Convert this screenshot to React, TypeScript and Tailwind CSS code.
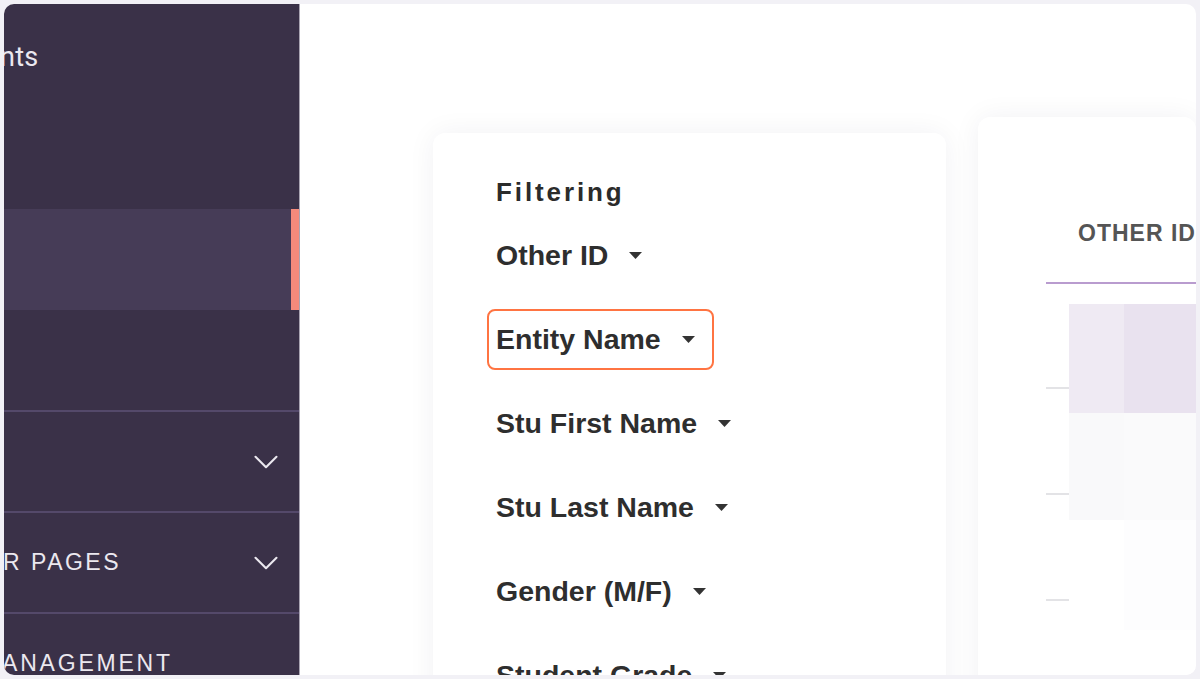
import { ChevronDown } from "lucide-react"

const filters = ["Other ID", "Entity Name", "Stu First Name", "Stu Last Name", "Gender (M/F)", "Student Grade"]

function Caret() {
  return (
    <svg width="13" height="7" viewBox="0 0 13 7" className="ml-[21px] shrink-0">
      <polygon points="0,0 13,0 6.5,7" fill="#333" />
    </svg>
  )
}

function SideRow({ children, divider = false, active = false, h = "h-[101px]" }: { children?: React.ReactNode; divider?: boolean; active?: boolean; h?: string }) {
  return (
    <div className={`relative flex items-center ${h} ${divider ? "border-t-2 border-[#54496a]" : ""} ${active ? "bg-[#463c57]" : ""}`}>
      {children}
      {active && <span className="absolute right-0 top-0 h-full w-[8px] bg-[#f48a7b]" />}
    </div>
  )
}

export default function App() {
  return (
    <div className="h-[679px] w-[1200px] bg-[#f2f1f6] p-[4px]" style={{ fontFamily: '"Liberation Sans", Arial, sans-serif' }}>
      <div className="flex h-[671px] overflow-hidden rounded-[10px] bg-white">
        <aside className="w-[296px] shrink-0 overflow-hidden border-r border-[#aaa5b3] bg-[#3a3148] pt-[3px] text-[#ebe8ef]">
          <SideRow>
            <span className="-ml-[4px] text-[27px] tracking-[0.3px]" style={{ fontFamily: "Roboto, sans-serif" }}>nts</span>
          </SideRow>
          <SideRow />
          <SideRow active />
          <SideRow h="h-[100px]" />
          <SideRow divider>
            <ChevronDown size={42} strokeWidth={1.2} className="absolute right-[12px]" />
          </SideRow>
          <SideRow divider>
            <span className="-ml-[1px] text-[23px] tracking-[2.5px]">R PAGES</span>
            <ChevronDown size={42} strokeWidth={1.2} className="absolute right-[12px]" />
          </SideRow>
          <SideRow divider>
            <span className="-ml-[2px] text-[23px] tracking-[2.8px]">ANAGEMENT</span>
          </SideRow>
        </aside>

        <main className="flex flex-1 items-start gap-[32px] overflow-hidden pl-[133px] pt-[113px]">
          <section className="mt-[16px] h-[640px] w-[513px] shrink-0 rounded-xl bg-white pl-[54px] pt-[43px] shadow-[0_0_28px_rgba(40,30,60,0.06)]">
            <h2 className="ml-[9px] text-[26px] font-bold leading-[32px] tracking-[2.9px] text-[#2b2b2b]">Filtering</h2>
            <div className="mt-[17px] flex flex-col items-start gap-[23px]">
              {filters.map((f) => (
                <div
                  key={f}
                  className={`inline-flex h-[61px] items-center rounded-lg border-2 pl-[7px] pr-[17px] text-[28.5px] font-bold text-[#2e2e2e] ${f === "Entity Name" ? "border-[#ff7442]" : "border-transparent"}`}
                >
                  <span>{f}</span>
                  <Caret />
                </div>
              ))}
            </div>
          </section>

          <section className="h-[650px] flex-1 rounded-xl bg-white pl-[68px] pt-[102px] shadow-[0_0_28px_rgba(40,30,60,0.06)]">
            <div className="border-b-2 border-[#b99ccf] pb-[35px] pl-[32px] text-[23px] font-bold leading-[28px] tracking-[1px] text-[#555]">
              OTHER ID
            </div>
            <div className="mt-[20px] grid grid-cols-[23px_55px_1fr]">
              <div className="row-span-3 flex flex-col gap-[104px] pt-[83px]">
                <span className="h-[2px] w-[23px] bg-[#e3e3e6]" />
                <span className="h-[2px] w-[23px] bg-[#e3e3e6]" />
                <span className="h-[2px] w-[23px] bg-[#e3e3e6]" />
              </div>
              <div className="h-[109px] bg-[#efeaf3]" />
              <div className="h-[109px] bg-[#e9e2ef]" />
              <div className="h-[107px] bg-[#f9f9fa]" />
              <div className="h-[107px] bg-[#fafafb]" />
              <div className="h-[110px] bg-white" />
              <div className="h-[110px] bg-[#fdfdfe]" />
            </div>
          </section>
        </main>
      </div>
    </div>
  )
}
